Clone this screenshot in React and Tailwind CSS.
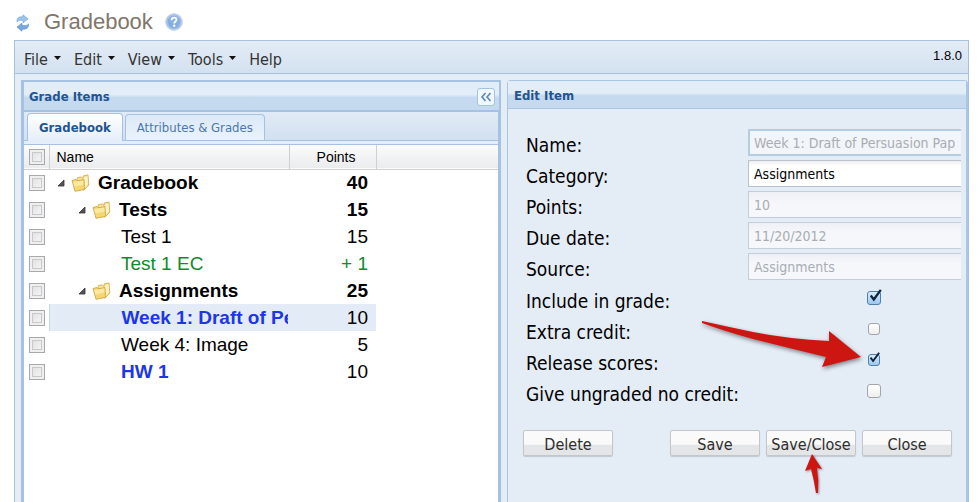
import React from "react";

const MENUS = [
  { label: "File", arrow: true },
  { label: "Edit", arrow: true },
  { label: "View", arrow: true },
  { label: "Tools", arrow: true },
  { label: "Help", arrow: false },
];

const ROWS = [
  { name: "Gradebook", points: "40", level: 0, folder: true, tone: "font-bold text-black" },
  { name: "Tests", points: "15", level: 1, folder: true, tone: "font-bold text-black" },
  { name: "Test 1", points: "15", level: 2, tone: "text-black" },
  { name: "Test 1 EC", points: "+ 1", level: 2, tone: "text-[#108a2c]", pointsTone: "text-[#108a2c]" },
  { name: "Assignments", points: "25", level: 1, folder: true, tone: "font-bold text-black" },
  { name: "Week 1: Draft of Pe", points: "10", level: 2, tone: "font-bold text-[#1c36e8]", selected: true },
  { name: "Week 4: Image", points: "5", level: 2, tone: "text-black" },
  { name: "HW 1", points: "10", level: 2, tone: "font-bold text-[#1c36e8]" },
];

const INDENT = ["pl-2", "pl-[29px]", "pl-[72px]"];

const UI_FONT = "font-['DejaVu_Sans_Condensed','DejaVu_Sans','Noto_Sans',sans-serif] [font-stretch:condensed]";
const BAR = "bg-linear-to-b from-[#e3ecf6] to-[#d3e1f0]";

function RefreshIcon() {
  return (
    <svg className="mt-1" width="16" height="18" viewBox="0 0 16 18" aria-hidden="true">
      <path d="M3 7.800C2.600 4 4.500 2.600 9 2.800V0.800L14 5L9 8.800V6.400C6 6.200 4.400 6.500 3 7.800Z" fill="#9cc5ec" stroke="#7aa9da" strokeWidth="0.7" />
      <path d="M14.500 10.200C14.800 14 12.500 15.400 8 15.200V17.200L3 13L8 9.200V11.600C11 11.800 13 11.500 14.500 10.200Z" fill="#79a8de" stroke="#5f90ca" strokeWidth="0.7" />
    </svg>
  );
}

function HelpIcon() {
  return (
    <svg className="mt-0.5" width="18" height="18" viewBox="0 0 18 18" aria-hidden="true">
      <circle cx="9" cy="9" r="8.300" fill="#a9c3e8" stroke="#c2d3ec" />
      <circle cx="9" cy="9" r="6.300" fill="#86aee2" />
      <path d="M6.600 7.200C6.600 5.500 7.700 4.700 9.100 4.700C10.500 4.700 11.500 5.500 11.500 6.800C11.500 8.400 9.200 8.600 9.200 10.400" fill="none" stroke="#fff" strokeWidth="1.800" />
      <circle cx="9.200" cy="12.800" r="1.200" fill="#fff" />
    </svg>
  );
}

function FolderIcon() {
  return (
    <svg className="shrink-0" width="19" height="18" viewBox="0 0 19 18" aria-hidden="true">
      <path d="M6 5L6.500 3.500L10.500 3L12 4.200L12.500 1.800L17 1L17.800 11L13 16L6 14Z" fill="#f8e49c" stroke="#cfa548" strokeWidth="0.8" />
      <path d="M13 3.500L16.500 2.500L16.800 10L13.300 14Z" fill="#fdf3c4" />
      <path d="M1 6.500L5 5.500L6 6.800L13 5.500L13.500 15.500L4 17.300Z" fill="#f5d670" stroke="#c9a043" strokeWidth="0.8" />
      <path d="M2.300 8L12.200 6.500L12.500 10.500L3.500 12.500Z" fill="#fae9a5" />
    </svg>
  );
}

function Expander() {
  return (
    <svg className="shrink-0" width="8" height="8" viewBox="0 0 8 8" aria-hidden="true">
      <path d="M7 1V7H1Z" fill="#555" stroke="#333" strokeWidth="0.8" />
    </svg>
  );
}

function RowCheck({ label }) {
  return (
    <input
      type="checkbox"
      aria-label={label}
      className="block size-4 appearance-none border border-[#a9a9a9] bg-linear-to-br from-[#dcdcde] to-[#fafafa] shadow-[inset_0_0_0_2px_#efefef,inset_0_0_0_3px_#c6c8cb]"
    />
  );
}

function GradeTable() {
  return (
    <table className="w-full table-fixed border-collapse bg-white font-['Liberation_Sans',Arial,sans-serif]">
      <colgroup>
        <col className="w-[25px]" />
        <col className="w-60" />
        <col className="w-[87px]" />
        <col />
      </colgroup>
      <thead>
        <tr className="h-6 border-b border-[#d0d0d0] bg-linear-to-b from-[#fbfbfb] to-[#ebecee] text-sm text-black">
          <th className="border-r border-[#d0d0d0] p-0 pl-[5px]"><RowCheck label="Select all" /></th>
          <th className="border-r border-[#d0d0d0] p-0 pl-[7px] text-left font-normal">Name</th>
          <th className="border-r border-[#d0d0d0] p-0 pr-5 text-right font-normal">Points</th>
          <th />
        </tr>
      </thead>
      <tbody>
        {ROWS.map((row) => (
          <tr key={row.name} className="h-[27px] text-[19px] leading-6">
            <td className={row.selected ? "border-r border-[#c9d9ec] p-0 pl-[5px]" : "p-0 pl-[5px]"}>
              <RowCheck label={"Select " + row.name} />
            </td>
            <td className={"p-0 pr-px " + (row.selected ? "bg-[#e2ebf6]" : "")}>
              <div className={"flex items-center overflow-hidden whitespace-nowrap " + INDENT[row.level]}>
                {row.folder && (
                  <span className="mr-2 flex items-center gap-1.5">
                    <Expander />
                    <FolderIcon />
                  </span>
                )}
                <span className={row.tone}>{row.name}</span>
              </div>
            </td>
            <td className={"p-0 pr-2 text-right " + (row.selected ? "bg-[#e2ebf6] " : "") + (row.folder ? "font-bold " : "") + (row.pointsTone || "text-black")}>
              {row.points}
            </td>
            <td />
          </tr>
        ))}
      </tbody>
    </table>
  );
}

function GradeItems() {
  return (
    <section className="flex min-w-0 flex-col border-t-2 border-r-2 border-l-3 border-[#a5c2e3] bg-white">
      <header className="flex h-7 items-center justify-between bg-linear-to-b from-[#e2edf8] from-45% to-[#c6daef] to-55% pt-0.5 pr-1 pl-[5px]">
        <h2 className="text-[13px] font-bold text-[#1f5592]">Grade Items</h2>
        <button type="button" aria-label="Collapse panel" className="flex size-[18px] items-center justify-center rounded-[3px] border border-[#a2c3e6] bg-[#f0f7fe]">
          <svg width="12" height="10" viewBox="0 0 12 10" fill="none" stroke="#5b86b5" strokeWidth="1.600" aria-hidden="true">
            <path d="M5.500 1L2 5L5.500 9M10.500 1L7 5L10.500 9" />
          </svg>
        </button>
      </header>
      <div className="flex flex-1 flex-col border-t-2 border-r border-[#a5c2e3]">
        <div role="tablist" className="flex h-[29px] items-end gap-0.5 border-b border-[#a5c2e3] bg-linear-to-b from-[#e1ebf6] to-[#d3e0f0] pl-[3px]">
          <button type="button" role="tab" aria-selected="true" className="-mb-px h-7 rounded-t border border-b-0 border-[#a5c2e3] bg-linear-to-b from-white to-[#e4eef9] px-[11px] text-[13px] font-bold text-[#1f5592]">
            Gradebook
          </button>
          <button type="button" role="tab" aria-selected="false" className="h-[26px] rounded-t border border-b-0 border-[#a5c2e3] bg-linear-to-b from-[#dce9f8] to-[#e9f3fd] px-[11px] text-[13px] text-[#4a78ac]">
            Attributes &amp; Grades
          </button>
        </div>
        <div className="h-1 border-b border-[#a5c2e3] bg-[#e4eef9]" />
        <GradeTable />
      </div>
    </section>
  );
}

const LABEL = "w-[222px] shrink-0 pt-1 text-[19px] leading-6 text-black";
const FIELD = "h-[27px] min-w-0 flex-1 border border-r-0 border-[#c3cedb] bg-linear-to-b from-[#edf0f5] to-[#f5f7fb] to-40% px-[5px] text-sm text-[#a9adb3]";

function TextField({ id, label, value }) {
  return (
    <div className="flex h-[31px]">
      <label htmlFor={id} className={LABEL}>{label}</label>
      <input id={id} type="text" disabled defaultValue={value} className={FIELD} />
    </div>
  );
}

function BigArrow() {
  return (
    <svg className="pointer-events-none absolute top-[-36px] right-4 drop-shadow-[1px_2px_2px_rgba(0,0,0,0.45)]" width="166" height="54" viewBox="0 0 166 54" aria-hidden="true">
      <path d="M3 3Q30 9 54 14Q90 21 130 23L130 13L162 39L123 49L127 39Q90 30 54 21Q25 13 3 5Z" fill="#cd1512" />
    </svg>
  );
}

function SmallArrow() {
  return (
    <svg className="pointer-events-none absolute top-[22px] left-[36px] drop-shadow-[1px_1px_1px_rgba(0,0,0,0.4)]" width="22" height="44" viewBox="0 0 22 44" aria-hidden="true">
      <path d="M10 2L20 17L15 16Q17 28 16 41L14 41Q12 28 9 17L3 19Z" fill="#cd1512" />
    </svg>
  );
}

function CheckField({ id, label, checked, small, arrow }) {
  const box = small ? "size-3" : "size-3.5";
  return (
    <div className="flex h-[31px]">
      <label htmlFor={id} className={LABEL}>{label}</label>
      <div className="relative flex h-[25px] min-w-0 flex-1 items-center pl-[119px]">
        <span className="relative flex w-3.5 justify-center">
          <input
            id={id}
            type="checkbox"
            defaultChecked={checked}
            className={box + " appearance-none rounded-[3px] border border-[#a3a5a9] bg-linear-to-b from-white to-[#eeeeee] checked:border-[#4f7fae] checked:from-[#d9ecfb] checked:to-[#9cc8ef]"}
          />
          {checked && (
            <svg className={"pointer-events-none absolute bottom-0.5 left-0.5 " + (small ? "size-3" : "size-3.5")} viewBox="0 0 16 16" fill="none" stroke="#0b2440" strokeWidth="2.600" aria-hidden="true">
              <path d="M2 7.500L5.500 12L13.500 1" />
            </svg>
          )}
          {arrow && <BigArrow />}
        </span>
      </div>
    </div>
  );
}

function FormButton({ children }) {
  return (
    <button type="button" className="h-[26px] w-[90px] rounded-[2px] border border-[#c3c6ca] bg-linear-to-b from-[#fafafa] from-55% to-[#e4e5e6] to-60% pt-1 text-base leading-5 whitespace-nowrap text-[#2e2e2e] shadow-[0_1px_1px_rgba(0,0,0,0.15)]">
      {children}
    </button>
  );
}

function EditItem() {
  return (
    <section className="min-w-0 rounded-t border border-r-2 border-b-0 border-[#a9c6e4] bg-[#e4ecf6]">
      <header className="flex h-[28px] items-center border-b border-[#a9c6e4] bg-linear-to-b from-[#e2edf8] from-45% to-[#c6daef] to-55% pt-0.5 pl-1.5">
        <h2 className="text-[13px] font-bold text-[#1f5592]">Edit Item</h2>
      </header>
      <form className="pt-5 pr-[5px] pl-[18px]" onSubmit={(e) => e.preventDefault()}>
        <div className="flex h-[31px]">
          <label htmlFor="item-name" className={LABEL}>Name:</label>
          <input id="item-name" type="text" disabled defaultValue="Week 1: Draft of Persuasion Paper" className="h-[27px] min-w-0 flex-1 border-2 border-r-0 border-[#b3cde5] bg-[#f2f5fa] pr-1.5 pl-1 text-sm text-[#a9adb3]" />
        </div>
        <div className="flex h-[31px]">
          <label htmlFor="item-category" className={LABEL}>Category:</label>
          <select id="item-category" className="h-[27px] min-w-0 flex-1 appearance-none border border-r-0 border-[#b9c3ce] bg-linear-to-b from-[#eeeeee] to-white to-20% px-[5px] text-sm text-black">
            <option>Assignments</option>
          </select>
        </div>
        <TextField id="item-points" label="Points:" value="10" />
        <TextField id="item-due" label="Due date:" value="11/20/2012" />
        <TextField id="item-source" label="Source:" value="Assignments" />
        <div className="pt-px">
          <CheckField id="include" label="Include in grade:" checked />
          <CheckField id="extra" label="Extra credit:" small />
          <CheckField id="release" label="Release scores:" checked small arrow />
          <CheckField id="ungraded" label="Give ungraded no credit:" />
        </div>
        <div className="-ml-[3px] flex justify-between pt-[21px] pr-[9px]">
          <FormButton>Delete</FormButton>
          <div className="flex gap-1.5">
            <FormButton>Save</FormButton>
            <div className="relative">
              <FormButton>Save/Close</FormButton>
              <SmallArrow />
            </div>
            <FormButton>Close</FormButton>
          </div>
        </div>
      </form>
    </section>
  );
}

export default function App() {
  return (
    <main className={"flex min-h-screen flex-col bg-white pr-[11px] pl-3.5 " + UI_FONT}>
      <header className="flex h-10 items-center pt-0.5">
        <RefreshIcon />
        <h1 className="mr-3 ml-3.5 font-['Liberation_Sans',Arial,sans-serif] text-[22px] text-[#80766a]">Gradebook</h1>
        <HelpIcon />
      </header>
      <div className="flex flex-1 flex-col border border-b-0 border-[#a9c0de] bg-[#e4ecf6]">
        <nav className={"flex h-[33px] items-center border-b border-[#a9c0de] pt-1.5 pr-1.5 pl-[9px] " + BAR}>
          <div className="flex items-center gap-[13px]">
            {MENUS.map((menu) => (
              <button key={menu.label} type="button" className="flex items-center gap-1.5 text-base leading-6 text-[#333]">
                {menu.label}
                {menu.arrow && (
                  <svg className="-mt-1" width="7" height="4" viewBox="0 0 7 4" aria-hidden="true">
                    <path d="M0 0H7L3.500 4Z" fill="#111" />
                  </svg>
                )}
              </button>
            ))}
          </div>
          <span className="-mt-2 ml-auto font-['Liberation_Sans',Arial,sans-serif] text-[13px] text-black">1.8.0</span>
        </nav>
        <div className="grid flex-1 grid-cols-[480fr_461fr] gap-1.5 pt-1.5 pl-1.5">
          <GradeItems />
          <EditItem />
        </div>
      </div>
    </main>
  );
}
